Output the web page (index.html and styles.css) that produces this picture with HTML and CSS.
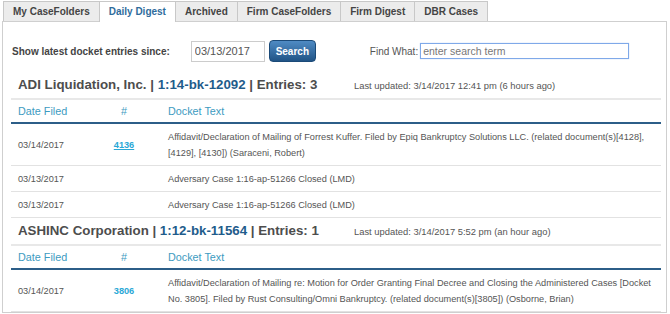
FILE: index.html
```html
<!DOCTYPE html>
<html lang="en">
<head>
    <meta charset="UTF-8">
    <meta name="viewport" content="width=device-width, initial-scale=1.0">
    <title>Daily Digest</title>
    <link rel="stylesheet" href="styles.css">
</head>
<body>
    <ul class="tabs">
        <li class="tab">My CaseFolders</li>
        <li class="tab active">Daily Digest</li>
        <li class="tab">Archived</li>
        <li class="tab">Firm CaseFolders</li>
        <li class="tab">Firm Digest</li>
        <li class="tab">DBR Cases</li>
    </ul>

    <div class="panel">
        <form class="controls">
            <label for="since" class="since-label">Show latest docket entries since:</label>
            <input type="text" id="since" class="date-input" value="03/13/2017">
            <button type="button" class="search-btn">Search</button>
            <label for="find" class="find-label">Find What:</label>
            <input type="text" id="find" class="find-input" placeholder="enter search term">
        </form>

        <!-- Fall 1 -->
        <div class="case-head">
            <h2>ADI Liquidation, Inc. | <span class="case-no">1:14-bk-12092</span> | Entries: 3</h2>
            <span class="updated">Last updated: 3/14/2017 12:41 pm (6 hours ago)</span>
        </div>
        <table class="docket">
            <thead>
                <tr>
                    <th class="col-date">Date Filed</th>
                    <th class="col-num">#</th>
                    <th class="col-text">Docket Text</th>
                </tr>
            </thead>
            <tbody>
                <tr>
                    <td class="col-date">03/14/2017</td>
                    <td class="col-num"><a href="#" class="doc-link">4136</a></td>
                    <td class="col-text">Affidavit/Declaration of Mailing of Forrest Kuffer. Filed by Epiq Bankruptcy Solutions LLC. (related document(s)[4128], [4129], [4130]) (Saraceni, Robert)</td>
                </tr>
                <tr>
                    <td class="col-date">03/13/2017</td>
                    <td class="col-num"></td>
                    <td class="col-text">Adversary Case 1:16-ap-51266 Closed (LMD)</td>
                </tr>
                <tr>
                    <td class="col-date">03/13/2017</td>
                    <td class="col-num"></td>
                    <td class="col-text">Adversary Case 1:16-ap-51266 Closed (LMD)</td>
                </tr>
            </tbody>
        </table>

        <!-- Fall 2 -->
        <div class="case-head">
            <h2>ASHINC Corporation | <span class="case-no">1:12-bk-11564</span> | Entries: 1</h2>
            <span class="updated">Last updated: 3/14/2017 5:52 pm (an hour ago)</span>
        </div>
        <table class="docket">
            <thead>
                <tr>
                    <th class="col-date">Date Filed</th>
                    <th class="col-num">#</th>
                    <th class="col-text">Docket Text</th>
                </tr>
            </thead>
            <tbody>
                <tr>
                    <td class="col-date">03/14/2017</td>
                    <td class="col-num"><a href="#" class="doc-link plain">3806</a></td>
                    <td class="col-text">Affidavit/Declaration of Mailing re: Motion for Order Granting Final Decree and Closing the Administered Cases [Docket No. 3805]. Filed by Rust Consulting/Omni Bankruptcy. (related document(s)[3805]) (Osborne, Brian)</td>
                </tr>
            </tbody>
        </table>
    </div>
</body>
</html>
```
FILE: styles.css
```css
html, body {
    overflow: hidden;
}
body {
    margin: 0;
    font-family: "Liberation Sans", Arial, sans-serif;
    color: #555;
    background: #fff;
}
.tabs {
    display: flex;
    list-style: none;
    margin: 0;
    padding: 1px 0 0 3px;
}
.tab {
    height: 19px;
    line-height: 19px;
    padding: 0 9px;
    margin-right: -1px;
    border: 1px solid #c8c8c8;
    border-bottom: none;
    background: #ececec;
    font-size: 10px;
    font-weight: bold;
    color: #444;
}
.tab.active {
    height: 20px;
    margin-bottom: -1px;
    background: #fff;
    color: #2f6c9c;
    position: relative;
}
.panel {
    width: 650px;
    margin-left: 2px;
    padding: 18px 5px 0 8px;
    border: 1px solid #cfcfcf;
}
.controls {
    display: flex;
    align-items: center;
    height: 22px;
    margin: 0;
}
.since-label {
    margin-left: 1px;
    margin-right: 21px;
    font-size: 10px;
    font-weight: bold;
    color: #444;
}
.date-input {
    box-sizing: border-box;
    width: 74px;
    height: 21px;
    padding: 0 3px;
    border: 1px solid #ccc;
    font-family: inherit;
    font-size: 11px;
    color: #555;
}
.search-btn {
    box-sizing: border-box;
    width: 47px;
    height: 22px;
    margin-left: 4px;
    padding: 0;
    border: 1px solid #1b4a78;
    border-radius: 4px;
    background: linear-gradient(#4f8bc4, #215486);
    font-family: inherit;
    font-size: 10px;
    font-weight: bold;
    color: #fff;
}
.find-label {
    margin-left: 54px;
    margin-right: 2px;
    font-size: 10px;
    color: #555;
}
.find-input {
    box-sizing: border-box;
    width: 209px;
    height: 16px;
    padding: 0 2px;
    border: 1px solid #7fa9e9;
    box-shadow: 0 0 1px #a9c6f0;
    outline: none;
    font-family: inherit;
    font-size: 10.5px;
    color: #555;
}
.find-input::placeholder {
    color: #777;
}
.case-head {
    display: flex;
    align-items: baseline;
    height: 26px;
    line-height: 26px;
    margin-top: 10px;
    border-bottom: 2px solid #e8e8e8;
}
.docket + .case-head {
    margin-top: 0;
}
.case-head h2 {
    box-sizing: border-box;
    width: 336px;
    margin: 0;
    padding-left: 7px;
    font-size: 13.3px;
    font-weight: bold;
    color: #4d4d4d;
}
.case-no {
    color: #1f5c8b;
}
.updated {
    padding-left: 7px;
    font-size: 9.4px;
    color: #555;
}
.docket {
    width: 100%;
    border-collapse: collapse;
}
.docket th {
    height: 22px;
    padding: 0 7px;
    border-bottom: 2px solid #2c5e88;
    font-size: 10.8px;
    font-weight: normal;
    color: #3d9bc1;
    text-align: left;
}
.docket td {
    padding: 5px 7px 4px;
    line-height: 16px;
    border-bottom: 1px solid #e2e2e2;
    font-size: 9.2px;
    color: #555;
}
.docket .col-date {
    width: 75px;
}
.docket .col-num {
    width: 48px;
    padding: 0;
    text-align: center;
}
.docket td.col-num {
    padding: 5px 0 4px;
}
.docket .col-text {
    padding-left: 20px;
}
.doc-link {
    font-weight: bold;
    color: #2aa8d6;
}
.doc-link.plain {
    text-decoration: none;
}
```
